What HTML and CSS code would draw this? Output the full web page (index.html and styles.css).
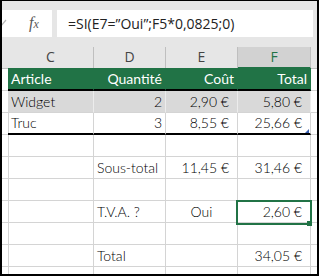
FILE: index.html
```html
<!DOCTYPE html>
<html lang="fr">
<head>
    <meta charset="UTF-8">
    <title>Feuille de calcul</title>
    <link rel="stylesheet" href="styles.css">
</head>
<body>
    <div class="window">
        <!-- barre de formule -->
        <div class="formula-bar">
            <div class="buttons">
                <svg class="check" width="6" height="8" viewBox="0 0 6 8"><polyline points="-3,4 -1,7 4,1" fill="none" stroke="#b8b8b8" stroke-width="1.2"/></svg>
                <span class="fx"><i>f</i><i class="x">x</i></span>
            </div>
            <div class="formula">=SI(E7=”Oui”;F5*0,0825;0)</div>
        </div>

        <!-- feuille -->
        <div class="sheet">
            <div class="row heads">
                <div class="cell"></div>
                <div class="cell">C</div>
                <div class="cell">D</div>
                <div class="cell">E</div>
                <div class="cell active">F</div>
                <div class="cell"></div>
            </div>
            <div class="row table-head">
                <div class="cell"></div>
                <div class="cell t">Article</div>
                <div class="cell t right">Quantité</div>
                <div class="cell t right">Coût</div>
                <div class="cell t right">Total</div>
                <div class="cell"></div>
            </div>
            <div class="row band">
                <div class="cell"></div>
                <div class="cell t">Widget</div>
                <div class="cell t right">2</div>
                <div class="cell t num">2,90 €</div>
                <div class="cell t num">5,80 €</div>
                <div class="cell"></div>
            </div>
            <div class="row last">
                <div class="cell"></div>
                <div class="cell t">Truc</div>
                <div class="cell t right">3</div>
                <div class="cell t num">8,55 €</div>
                <div class="cell t num resize">25,66 €</div>
                <div class="cell"></div>
            </div>
            <div class="row">
                <div class="cell"></div><div class="cell"></div><div class="cell"></div><div class="cell"></div><div class="cell"></div><div class="cell"></div>
            </div>
            <div class="row">
                <div class="cell"></div>
                <div class="cell"></div>
                <div class="cell">Sous-total</div>
                <div class="cell num">11,45 €</div>
                <div class="cell num">31,46 €</div>
                <div class="cell"></div>
            </div>
            <div class="row">
                <div class="cell"></div><div class="cell"></div><div class="cell"></div><div class="cell"></div><div class="cell"></div><div class="cell"></div>
            </div>
            <div class="row">
                <div class="cell"></div>
                <div class="cell"></div>
                <div class="cell">T.V.A. ?</div>
                <div class="cell center">Oui</div>
                <div class="cell num selected">2,60 €</div>
                <div class="cell"></div>
            </div>
            <div class="row">
                <div class="cell"></div><div class="cell"></div><div class="cell"></div><div class="cell"></div><div class="cell"></div><div class="cell"></div>
            </div>
            <div class="row">
                <div class="cell"></div>
                <div class="cell"></div>
                <div class="cell">Total</div>
                <div class="cell"></div>
                <div class="cell num">34,05 €</div>
                <div class="cell"></div>
            </div>
            <div class="row">
                <div class="cell"></div><div class="cell"></div><div class="cell"></div><div class="cell"></div><div class="cell"></div><div class="cell"></div>
            </div>
        </div>
    </div>
</body>
</html>
```

FILE: styles.css
```css
body {
    margin: 0;
    font-family: Lato, "Liberation Sans", sans-serif;
}
.window {
    width: 319px;
    height: 276px;
    box-sizing: border-box;
    border: 2px solid #000;
    border-top-width: 1px;
    background-color: #e6e6e6;
    overflow: hidden;
}
.formula-bar {
    display: flex;
    gap: 5px;
    height: 46px;
    padding: 9px 4px 10px 0;
    box-sizing: border-box;
}
.buttons {
    width: 50px;
    background-color: white;
    position: relative;
}
.check {
    position: absolute;
    left: 0;
    top: 9px;
}
.fx {
    position: absolute;
    left: 27px;
    top: 4px;
    font-family: "Liberation Serif", serif;
    font-size: 16px;
    color: #5a5a5a;
}
.fx .x {
    font-size: 12px;
}
.formula {
    flex: 1;
    background-color: white;
    padding-left: 11px;
    font-family: "Open Sans", sans-serif;
    font-size: 14px;
    line-height: 27px;
    color: #222;
    white-space: nowrap;
    overflow: hidden;
}
.sheet {
    background-color: white;
}
.row {
    display: grid;
    grid-template-columns: 6px 86px 72px 72px 73px 1fr;
    height: 22px;
}
.cell {
    border-right: 1px solid #d4d4d4;
    border-bottom: 1px solid #d4d4d4;
    box-sizing: border-box;
    padding: 0 3px;
    font-size: 14px;
    font-weight: 300;
    line-height: 21px;
    color: #000;
    white-space: nowrap;
}
.right {
    text-align: right;
}
.center {
    text-align: center;
}
.num {
    text-align: right;
    padding-right: 8px;
}
/* en-têtes de colonnes */
.heads {
    height: 21px;
}
.heads .cell {
    background-color: #e6e6e6;
    border-color: #bfbfbf;
    text-align: center;
    font-family: "Open Sans", sans-serif;
    font-size: 14px;
    font-weight: 400;
    line-height: 20px;
    color: #444;
}
.heads .active {
    background-color: #d2d2d2;
    border-bottom: 2px solid #217346;
    color: #217346;
}
/* tableau */
.table-head {
    height: 23px;
}
.table-head .t {
    background-color: #217346;
    color: white;
    font-weight: 400;
    border-right-color: #217346;
    border-bottom: 2px solid #000;
}
.band .t {
    background-color: #d9d9d9;
    border-right-color: #ececec;
}
.last .t {
    border-bottom: 2px solid #000;
    line-height: 20px;
}
.resize {
    position: relative;
}
.resize::after {
    content: "";
    position: absolute;
    right: 1px;
    bottom: 0;
    border-left: 4px solid transparent;
    border-bottom: 4px solid #3a5fb0;
}
.selected {
    position: relative;
}
.selected::before {
    content: "";
    position: absolute;
    left: -2px;
    top: -1px;
    width: 76px;
    height: 25px;
    border: 2px solid #217346;
    box-sizing: border-box;
}
.selected::after {
    content: "";
    position: absolute;
    left: 69px;
    top: 20px;
    width: 5px;
    height: 5px;
    background-color: #217346;
}
```
